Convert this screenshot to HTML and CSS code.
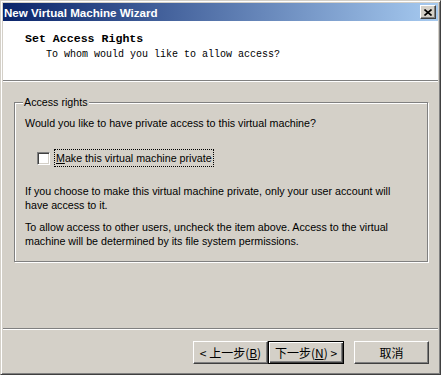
FILE: index.html
```html
<!DOCTYPE html>
<html lang="en">
<head>
  <meta charset="UTF-8">
  <title>New Virtual Machine Wizard</title>
  <link rel="stylesheet" href="styles.css">
</head>
<body>
  <div class="window">
    <div class="titlebar">
      <span class="title">New Virtual Machine Wizard</span>
      <span class="close-btn">
        <svg width="8" height="7" viewBox="0 0 8 7">
          <path d="M0.5 0.5 L7.5 6.5 M7.5 0.5 L0.5 6.5" stroke="#000" stroke-width="1.6" fill="none"/>
        </svg>
      </span>
    </div>

    <div class="header">
      <div class="header-title">Set Access Rights</div>
      <div class="header-sub">To whom would you like to allow access?</div>
    </div>

    <div class="body">
      <fieldset class="group">
        <legend>Access rights</legend>
        <div class="group-body">
          <p class="question">Would you like to have private access to this virtual machine?</p>
          <label class="check-row">
            <span class="checkbox"></span>
            <span class="check-label"><u>M</u>ake this virtual machine private</span>
          </label>
          <p class="info first">If you choose to make this virtual machine private, only your user account will have access to it.</p>
          <p class="info">To allow access to other users, uncheck the item above. Access to the virtual machine will be determined by its file system permissions.</p>
        </div>
      </fieldset>
    </div>

    <div class="footer">
      <button class="btn">&lt; 上一步(<u>B</u>)</button>
      <button class="btn btn-default">下一步(<u>N</u>) &gt;</button>
      <button class="btn btn-cancel">取消</button>
    </div>
  </div>
</body>
</html>
```

FILE: styles.css
```css
body {
  margin: 0;
  background: #d4d0c8;
  font-family: "Liberation Sans", Arial, sans-serif;
  font-size: 10.7px;
  color: #000;
}
.window {
  width: 441px;
  height: 375px;
  box-sizing: border-box;
  border: 1px solid;
  border-color: #d4d0c8 #404040 #404040 #d4d0c8;
  box-shadow: inset 1px 1px 0 #fff, inset -1px -1px 0 #808080;
  padding: 2px;
  display: flex;
  flex-direction: column;
  background: #d4d0c8;
}
.titlebar {
  height: 18px;
  flex-shrink: 0;
  background: linear-gradient(to right, #0a246a, #a6caf0);
  display: flex;
  align-items: center;
  justify-content: space-between;
  padding: 0 2px 0 1px;
}
.title {
  color: #fff;
  font-weight: bold;
  font-size: 11.6px;
}
.close-btn {
  width: 16px;
  height: 14px;
  box-sizing: border-box;
  background: #d4d0c8;
  border: 1px solid;
  border-color: #fff #404040 #404040 #fff;
  box-shadow: inset -1px -1px 0 #808080;
  display: flex;
  align-items: center;
  justify-content: center;
}
.header {
  flex-shrink: 0;
  background: #fff;
  border-bottom: 1px solid #808080;
  box-shadow: 0 1px 0 #fff;
  box-sizing: border-box;
  height: 60px;
  padding: 10px 0 0 22px;
  font-family: "Liberation Mono", monospace;
}
.header-title {
  font-weight: bold;
  font-size: 11.6px;
  line-height: 16px;
}
.header-sub {
  font-size: 10px;
  line-height: 16px;
  padding-left: 21px;
}
.body {
  flex: 1;
  padding: 14px 10px 0 11px;
}
.group {
  margin: 0;
  padding: 0;
  border: 1px solid #808080;
  box-shadow: 1px 1px 0 #fff, inset 1px 1px 0 #fff;
  height: 167px;
  box-sizing: border-box;
}
.group legend {
  margin-left: 8px;
  padding: 0 1px;
  line-height: 14px;
  background: #d4d0c8;
}
.group-body {
  padding: 0 20px 0 10px;
}
.group-body p {
  margin: 0;
  line-height: 14px;
}
.question {
  padding-top: 7px;
}
.check-row {
  display: flex;
  align-items: center;
  gap: 5px;
  margin: 20px 0 0 12px;
}
.checkbox {
  width: 13px;
  height: 13px;
  box-sizing: border-box;
  background: #fff;
  border: 1px solid;
  border-color: #808080 #fff #fff #808080;
  box-shadow: inset 1px 1px 0 #404040, inset -1px -1px 0 #d4d0c8;
}
.check-label {
  outline: 1px dotted #000;
  padding: 1px 1px;
  line-height: 14px;
}
.group-body .info.first {
  margin-top: 18px;
}
.group-body .info + .info {
  margin-top: 8px;
}
.footer {
  border-top: 1px solid #808080;
  box-shadow: inset 0 1px 0 #fff;
  height: 44px;
  flex-shrink: 0;
  display: flex;
  justify-content: flex-end;
  align-items: flex-start;
  padding: 12px 9px 0 0;
  box-sizing: border-box;
}
.btn {
  width: 75px;
  height: 23px;
  padding: 0;
  background: #d4d0c8;
  font-family: "Noto Sans CJK SC", sans-serif;
  font-size: 12px;
  color: #000;
  border: 1px solid;
  border-color: #fff #404040 #404040 #fff;
  box-shadow: inset -1px -1px 0 #808080;
}
.btn-default {
  width: 76px;
  border-color: #000;
  box-shadow: inset 1px 1px 0 #fff, inset -1px -1px 0 #404040, inset -2px -2px 0 #808080;
}
.btn-cancel {
  margin-left: 10px;
}
```
